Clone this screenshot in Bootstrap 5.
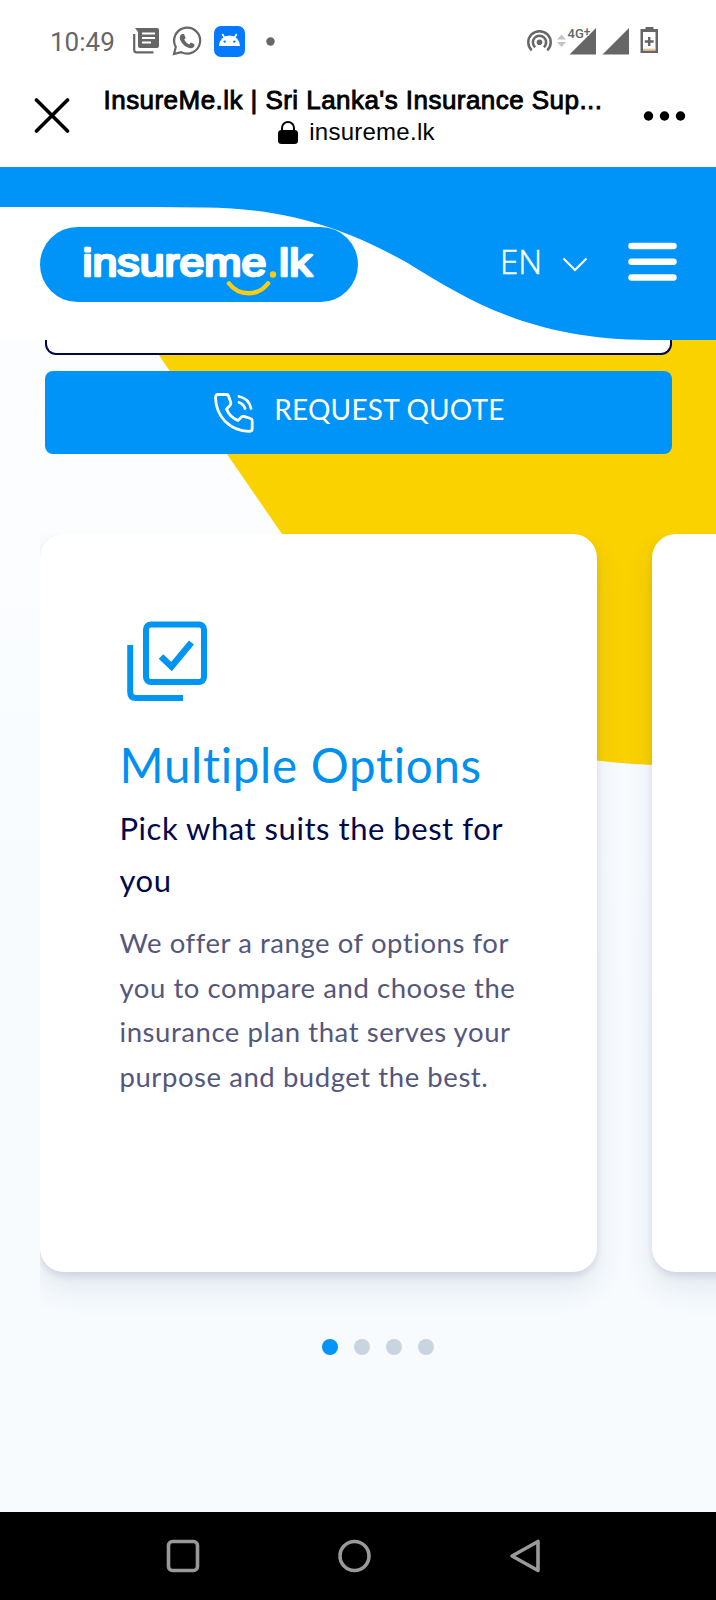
<!DOCTYPE html>
<html lang="en">
<head>
<meta charset="utf-8">
<meta name="viewport" content="width=device-width, initial-scale=1">
<title>InsureMe.lk | Sri Lanka's Insurance Supermarket</title>
<link href="https://cdn.jsdelivr.net/npm/bootstrap@5.3.0/dist/css/bootstrap.min.css" rel="stylesheet">
<style>
:root{--brand:#0094f9;--sun:#fad200;--navy:#03084c}
body{font-family:Lato,"Open Sans",sans-serif;background:#fff;overflow:hidden;font-variant-ligatures:none}
.phone{width:716px;height:1600px}
svg{display:block;flex:none}
.status{height:82px;padding:0 57px 0 50px;color:#666;font:26px/1 Roboto,sans-serif}
.clock{width:83px;padding-top:2px}
.browser{height:85px;padding:0 30px 0 34px;font-family:"Liberation Sans",sans-serif;color:#000}
.tab-title{font-size:26px;line-height:30px;letter-spacing:.45px;-webkit-text-stroke:.9px #000;white-space:nowrap;margin-left:-7px}
.tab-url{font-size:24px;line-height:30px;letter-spacing:.25px;margin-top:2px}
.site-nav{height:173px;background:var(--brand);padding:0 39px 0 40px}
.logo-pill{width:318px;height:75px;border-radius:38px;background:var(--brand);margin-top:22px}
.lang{font:300 33px/1 "Open Sans",sans-serif;-webkit-text-stroke:.5px #fff}
.page{background:linear-gradient(#fcfdff,#f7fbfe 60%);padding:0 44px 0 45px}
.field-end{height:17px;width:627px;background:#fff;border:2px solid var(--navy);border-top:0;border-radius:0 0 11px 11px;margin-top:-2px}
.quote{height:83px;width:627px;margin-top:16px;background:var(--brand);border:0;border-radius:8px;color:#fff;font-size:28px;letter-spacing:.2px}
.quote:hover{background:var(--brand);color:#fff}
.cta{margin-bottom:8px}
.slides{margin:80px -44px 0 -5px;height:790px;gap:55px;overflow:hidden}
.slide-card{flex:0 0 557px;height:738px;border:0;border-radius:24px;background:#fff;padding:87px 75px 0 79.500px;box-shadow:0 4px 6px rgba(50,60,100,.12),0 16px 30px rgba(50,60,100,.1)}
.slide-card h2{font-size:47.500px;line-height:56px;letter-spacing:.7px;color:#0091ee;margin:36px 0 0 0;font-weight:400;white-space:nowrap}
.slide-card h3{font-size:31px;line-height:51.5px;letter-spacing:.54px;color:var(--navy);margin:10px 0 0;font-weight:400;white-space:nowrap}
.slide-card p{font-size:27.5px;line-height:44.7px;letter-spacing:.56px;color:#54577b;margin:15px 0 0;white-space:nowrap}
.pager{gap:15.900px;margin-top:15px;padding-left:277px}
.pager span{width:16px;height:16px;border-radius:50%;background:#c8d5e0}
.pager .on{background:var(--brand)}
.sysbar{height:88px;background:#000;padding:0 175px 0 166px}
</style>
</head>
<body>
<div class="phone d-flex flex-column position-relative overflow-hidden">
  <div class="status d-flex align-items-center">
    <span class="clock">10:49</span>
    <svg width="26" height="26" viewBox="0 0 26 26" fill="#666"><path d="M2 0H24Q26 0 26 2V18Q26 20 24 20H7Q5 20 5 18V4Z"/><path d="M9 5.500H22M9 10H22M9 14.500H18" stroke="#fff" stroke-width="2"/><path d="M1.200 6V22Q1.200 24.300 3.500 24.300H20.500" fill="none" stroke="#666" stroke-width="2.200"/></svg>
    <svg style="margin-left:13px" width="30" height="30" viewBox="0 0 30 30"><path d="M2 28L3.800 21A13 13 0 1 1 9 26.100Z" fill="none" stroke="#666" stroke-width="2.200"/><path d="M10 8H12L13.600 11.800L12.200 13.800Q14 17 17.200 18.400L18.900 16.500L22.500 18.200Q22.600 22 18.600 22.200Q14 22 10.400 17.600Q7.500 14 7.700 11.400Q8 9 10 8Z" fill="#666"/></svg>
    <svg style="margin-left:12px" width="31" height="31" viewBox="0 0 31 31"><rect width="31" height="31" rx="7" fill="#057afe"/><path d="M5 20A10.500 10.500 0 0 1 26 20Z" fill="#fff"/><path d="M8.300 8L11 12.500M22.700 8L20 12.500" stroke="#fff" stroke-width="1.700"/><circle cx="10.700" cy="15.600" r="1.200" fill="#057afe"/><circle cx="20.300" cy="15.600" r="1.200" fill="#057afe"/></svg>
    <svg style="margin-left:21px" width="9" height="9"><circle cx="4.500" cy="4.500" r="4.200" fill="#666"/></svg>
    <svg class="ms-auto" width="133" height="30" viewBox="0 0 133 30">
      <g fill="none" stroke="#666" stroke-width="2.500"><path d="M5.700 24.400A11.200 11.200 0 1 1 21.300 24.400"/><path d="M9.200 21.300A6.600 6.600 0 1 1 17.800 21.300"/></g><circle cx="13.500" cy="16.200" r="2.800" fill="#666"/>
      <path d="M31 13.500L35.500 8.500L40 13.500ZM31 16L35.500 21L40 16Z" fill="#c4c4c4"/>
      <path d="M43.500 28.500L70 2V28.500ZM76.500 28.500L103 2V28.500Z" fill="#666"/>
      <text x="41.500" y="11.500" font-family="Roboto,sans-serif" font-weight="500" font-size="13" fill="#666" stroke="#fff" stroke-width="1.500" paint-order="stroke">4G<tspan dy="-2" font-size="12">+</tspan></text>
      <path d="M119.500 1H127.500V3H132V27H114.500V3H119.500Z" fill="#666"/><path d="M117 6H129.500V24.500H117Z" fill="#fff"/><path d="M117 23.500H129.500" stroke="#e9c58a" stroke-width="1.600"/><path d="M123.250 11V20M118.800 15.500H127.700" stroke="#666" stroke-width="2.400"/>
    </svg>
  </div>
  <div class="browser d-flex align-items-start justify-content-between">
    <svg style="margin-top:16px" width="36" height="36" viewBox="0 0 36 36"><path d="M2.500 2L33.500 33M33.500 2L2.500 33" stroke="#000" stroke-width="3.600" stroke-linecap="round"/></svg>
    <div class="d-flex flex-column align-items-center" style="padding-top:3px">
      <div class="tab-title">InsureMe.lk | Sri Lanka's Insurance Sup...</div>
      <div class="tab-url d-flex align-items-center"><svg style="margin-right:11px" width="20" height="25" viewBox="0 0 20 25"><path d="M4 12V8A6 6 0 0 1 16 8V12" fill="none" stroke="#000" stroke-width="2"/><rect y="10" width="20" height="14" rx="3.500"/></svg>insureme.lk</div>
    </div>
    <svg style="margin-top:29px" width="43" height="10"><circle cx="5.500" cy="5" r="4.700"/><circle cx="21.500" cy="5" r="4.700"/><circle cx="37.500" cy="5" r="4.700"/></svg>
  </div>
  <nav class="site-nav d-flex align-items-center position-relative z-1 text-white">
    <svg class="position-absolute top-0 start-0" width="716" height="173" viewBox="0 0 716 173"><path d="M0 40H150L205 40.500C290 41 350 64 406 95C466 132 530 173 650 173H0Z" fill="#fff"/></svg>
    <a class="logo-pill position-relative d-block" href="#" aria-label="insureme.lk"><svg width="318" height="75" viewBox="0 0 318 75"><g font-family="'Liberation Sans',sans-serif" font-size="39" fill="#fff" stroke="#fff" stroke-width="2.500" stroke-linejoin="round"><text x="42.500" y="49" textLength="184" lengthAdjust="spacingAndGlyphs">insureme</text><text x="239" y="49" textLength="33" lengthAdjust="spacingAndGlyphs">lk</text></g><circle cx="233" cy="47.500" r="3.200" fill="#facd12"/><path d="M189 56.500C199 69.500 218 69.500 228 56.500" fill="none" stroke="#facd12" stroke-width="4.500" stroke-linecap="round"/></svg></a>
    <div class="ms-auto position-relative d-flex align-items-center" style="margin-top:15px">
      <span class="lang">EN</span>
      <svg style="margin:7px 40px 0 20px" width="26" height="15" viewBox="0 0 26 15"><path d="M1.500 1.500L13 13L24.500 1.500" fill="none" stroke="#fff" stroke-width="2"/></svg>
      <svg width="49" height="39" viewBox="0 0 49 39"><path d="M3.500 4H45.500M3.500 19.700H45.500M3.500 35.500H45.500" stroke="#fff" stroke-width="6.500" stroke-linecap="round"/></svg>
    </div>
  </nav>
  <main class="page flex-grow-1 position-relative">
    <svg class="position-absolute top-0 start-0" width="716" height="430" viewBox="0 0 716 430"><path d="M148.500 0L282 194L430 385Q520 418 652 425L716 427V0Z" fill="#fad200"/></svg>
    <div class="position-relative">
      <div class="field-end"></div>
      <button class="quote btn d-flex align-items-center justify-content-center p-0">
        <svg style="margin:0 20px 0 2px" width="40" height="40" viewBox="0 0 40 40" fill="none" stroke="#fff" stroke-width="2.800" stroke-linejoin="round" stroke-linecap="round"><path d="M4 1.500H12.500Q14 1.500 14.500 3L16.800 9.500Q17.200 11 16.200 12.200L12.500 16Q15.500 24 24 27.500L27.500 24Q28.500 23 30 23.400L36.500 25.500Q38.200 26 38.200 27.800V35.500Q38.200 38.400 35 38.400Q21 38 11.300 28.500Q2 19 1.500 5Q1.500 1.500 4 1.500Z"/><path d="M25 9.500Q29.500 11 31 15.500M25 3.500Q35 5.500 37 15.500"/></svg>
        <span class="cta">REQUEST QUOTE</span>
      </button>
      <div class="slides d-flex">
        <article class="slide-card card">
          <svg style="margin-left:7.500px" width="80" height="80" viewBox="0 0 80 80" fill="none" stroke="#0094f3" stroke-width="6"><rect x="19" y="3.500" width="58" height="57.500" rx="5"/><path d="M3.200 24V71Q3.200 77 9 77H56"/><path d="M34 35.500L44.500 45.500L64.500 21.500" stroke-width="6.500"/></svg>
          <h2>Multiple Options</h2>
          <h3>Pick what suits the best for<br>you</h3>
          <p>We offer a range of options for<br>you to compare and choose the<br>insurance plan that serves your<br>purpose and budget the best.</p>
        </article>
        <article class="slide-card card"></article>
      </div>
      <div class="pager d-flex"><span class="on"></span><span></span><span></span><span></span></div>
    </div>
  </main>
  <div class="sysbar d-flex align-items-center justify-content-between">
    <svg width="34" height="34" fill="none" stroke="#999" stroke-width="3.600"><rect x="2.500" y="2.500" width="29" height="29" rx="4"/></svg>
    <svg width="34" height="34" fill="none" stroke="#999" stroke-width="3.600"><circle cx="16.500" cy="17" r="14.500"/></svg>
    <svg width="32" height="34" fill="none" stroke="#999" stroke-width="3.600" stroke-linejoin="round"><path d="M29 2.500V31.500L3 17Z"/></svg>
  </div>
</div>
<script src="https://cdn.jsdelivr.net/npm/bootstrap@5.3.0/dist/js/bootstrap.bundle.min.js"></script>
</body>
</html>
